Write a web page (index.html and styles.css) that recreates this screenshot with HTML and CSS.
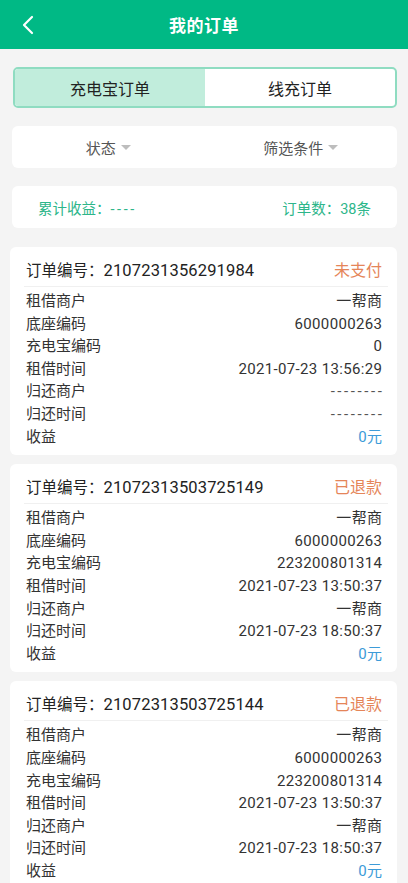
FILE: index.html
```html
<!DOCTYPE html>
<html lang="zh-CN">
<head>
<meta charset="utf-8">
<title>我的订单</title>
<link rel="stylesheet" href="styles.css">
</head>
<body>
<header class="topbar">
  <svg class="back" width="14" height="20" viewBox="0 0 14 20"><path d="M11 2 L3 10 L11 18" fill="none" stroke="#fff" stroke-width="2.2" stroke-linecap="round" stroke-linejoin="round"/></svg>
  <h1 class="title">我的订单</h1>
</header>
<main class="content">
  <div class="tabs">
    <div class="tab active">充电宝订单</div>
    <div class="tab">线充订单</div>
  </div>
  <div class="filters">
    <div class="filter">状态<span class="caret"></span></div>
    <div class="filter">筛选条件<span class="caret"></span></div>
  </div>
  <div class="summary">
    <span class="sum-item">累计收益：<span class="sum-dash">----</span></span>
    <span class="sum-item">订单数：38条</span>
  </div>
  <div class="cards">
    <section class="card">
      <div class="card-head"><span class="order-no">订单编号：<span class="num">2107231356291984</span></span><span class="status">未支付</span></div>
      <div class="rows">
        <div class="row"><span>租借商户</span><span class="val">一帮商</span></div>
        <div class="row"><span>底座编码</span><span class="val">6000000263</span></div>
        <div class="row"><span>充电宝编码</span><span class="val">0</span></div>
        <div class="row"><span>租借时间</span><span class="val">2021-07-23 13:56:29</span></div>
        <div class="row"><span>归还商户</span><span class="val dash">--------</span></div>
        <div class="row"><span>归还时间</span><span class="val dash">--------</span></div>
        <div class="row"><span>收益</span><span class="val money">0元</span></div>
      </div>
    </section>
    <section class="card">
      <div class="card-head"><span class="order-no">订单编号：<span class="num">21072313503725149</span></span><span class="status">已退款</span></div>
      <div class="rows">
        <div class="row"><span>租借商户</span><span class="val">一帮商</span></div>
        <div class="row"><span>底座编码</span><span class="val">6000000263</span></div>
        <div class="row"><span>充电宝编码</span><span class="val">223200801314</span></div>
        <div class="row"><span>租借时间</span><span class="val">2021-07-23 13:50:37</span></div>
        <div class="row"><span>归还商户</span><span class="val">一帮商</span></div>
        <div class="row"><span>归还时间</span><span class="val">2021-07-23 18:50:37</span></div>
        <div class="row"><span>收益</span><span class="val money">0元</span></div>
      </div>
    </section>
    <section class="card">
      <div class="card-head"><span class="order-no">订单编号：<span class="num">21072313503725144</span></span><span class="status">已退款</span></div>
      <div class="rows">
        <div class="row"><span>租借商户</span><span class="val">一帮商</span></div>
        <div class="row"><span>底座编码</span><span class="val">6000000263</span></div>
        <div class="row"><span>充电宝编码</span><span class="val">223200801314</span></div>
        <div class="row"><span>租借时间</span><span class="val">2021-07-23 13:50:37</span></div>
        <div class="row"><span>归还商户</span><span class="val">一帮商</span></div>
        <div class="row"><span>归还时间</span><span class="val">2021-07-23 18:50:37</span></div>
        <div class="row"><span>收益</span><span class="val money">0元</span></div>
      </div>
    </section>
  </div>
</main>
</body>
</html>
```
FILE: styles.css
```css
* { box-sizing: border-box; }
html, body { margin: 0; padding: 0; }
body {
  background: #f4f4f4;
  font-family: Roboto, "Noto Sans CJK SC", sans-serif;
  color: #222;
  width: 408px;
  overflow: hidden;
}
.topbar {
  height: 49px;
  background: #00b985;
  display: flex;
  align-items: center;
  justify-content: center;
  position: relative;
}
.back { position: absolute; left: 21px; top: 15px; }
.title {
  margin: 0;
  font-size: 17px;
  font-weight: 700;
  color: #fff;
  letter-spacing: 0.5px;
}
.content { padding: 18px 11px 0 13px; }
.tabs {
  display: flex;
  height: 41px;
  border: 2px solid #8fdcc1;
  border-radius: 5px;
  overflow: hidden;
  background: #fff;
}
.tab {
  flex: 1;
  display: flex;
  align-items: center;
  justify-content: center;
  font-size: 16px;
  color: #222;
}
.tab.active { background: #c1eddc; }
.filters {
  margin-top: 18px;
  margin-left: -1px;
  height: 42px;
  background: #fff;
  border-radius: 6px;
  display: flex;
}
.filter {
  flex: 1;
  display: flex;
  align-items: center;
  justify-content: center;
  font-size: 15px;
  color: #555;
}
.caret {
  width: 0; height: 0;
  margin-left: 5px;
  border-left: 5px solid transparent;
  border-right: 5px solid transparent;
  border-top: 5px solid #bdbdbd;
}
.summary {
  margin-top: 18px;
  margin-left: -1px;
  height: 42px;
  background: #fff;
  border-radius: 6px;
  display: flex;
  align-items: center;
  justify-content: space-between;
  padding: 0 26px;
  font-size: 14.5px;
  color: #2db68a;
}
.sum-item { white-space: nowrap; }
.sum-dash { letter-spacing: 2.6px; }
.cards {
  margin: 19px 0 0 -3px;
  display: flex;
  flex-direction: column;
  gap: 9px;
}
.card {
  background: #fff;
  border-radius: 6px;
  padding: 0 15px 7px 16px;
}
.card-head {
  display: flex;
  justify-content: space-between;
  align-items: center;
  height: 40px;
  padding-top: 5px;
  margin-right: -6px;
  margin-left: -2px;
  padding-left: 2px;
  padding-right: 6px;
  border-bottom: 1px solid #f0f0f0;
  font-size: 15.5px;
}
.num { font-size: 16.5px; letter-spacing: 0.15px; }
.status { font-size: 16px; color: #e58559; }
.rows { padding-top: 3px; }
.row {
  display: flex;
  justify-content: space-between;
  height: 22.6px;
  line-height: 22.6px;
  font-size: 15px;
  color: #333;
  white-space: nowrap;
}
.val { letter-spacing: 0.35px; margin-right: -0.35px; }
.dash { color: #555; letter-spacing: 2.6px; margin-right: -2.6px; }
.money { color: #3d9bd8; }
```
